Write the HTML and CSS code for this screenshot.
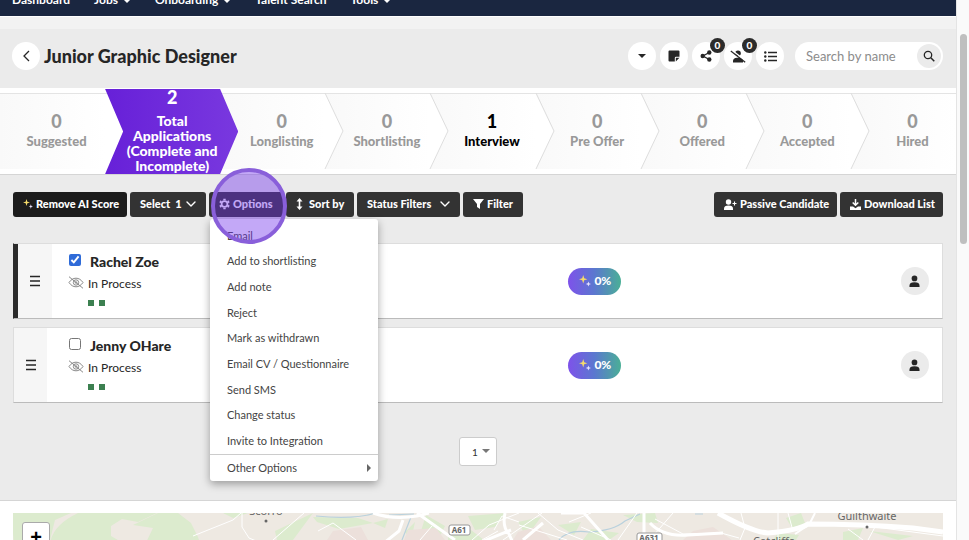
FILE: index.html
```html
<!DOCTYPE html>
<html lang="en">
<head>
<meta charset="utf-8">
<title>Junior Graphic Designer</title>
<link rel="stylesheet" href="styles.css">
</head>
<body>
<svg class="defs" aria-hidden="true">
  <symbol id="sparkle" viewBox="0 0 12 12"><path class="spark-big" d="M4.2 0 5.2 3.200 8.400 4.200 5.200 5.200 4.200 8.400 3.200 5.200 0 4.200 3.200 3.200Z"/><path class="spark-small" d="M9.400 6.400 10.100 8.300 12 9 10.100 9.700 9.400 11.600 8.700 9.700 6.800 9 8.700 8.300Z"/></symbol>
  <symbol id="chevron" viewBox="0 0 10 6"><path d="M1 1 5 5 9 1" fill="none" stroke="currentColor" stroke-width="1.4" stroke-linecap="round" stroke-linejoin="round"/></symbol>
  <symbol id="person" viewBox="0 0 12 14"><circle cx="6" cy="3.6" r="3.1"/><path d="M.5 13V11.6C.5 9 2.2 7.8 6 7.8S11.500 9 11.500 11.600V13Z"/></symbol>
  <symbol id="hidden" viewBox="0 0 16 13"><g fill="none" stroke="#8a8a8a" stroke-width="1"><path d="M1 6.500C3 3.600 5.300 2.200 8 2.200S13 3.600 15 6.500C13 9.400 10.700 10.800 8 10.800S3 9.400 1 6.500Z"/><circle cx="8" cy="6.500" r="2.700"/><circle cx="8" cy="6.500" r=".8"/><path d="M1 .7 15 12.300"/></g></symbol>
  <symbol id="bars" viewBox="0 0 12 12"><path d="M1 1.500H11M1 6H11M1 10.500H11" stroke="currentColor" stroke-width="1.700"/></symbol>
</svg>
<div class="page">
  <div class="content">
    <nav class="nav">
      <a href="#">Dashboard</a>
      <a href="#">Jobs <i class="caret"></i></a>
      <a href="#">Onboarding <i class="caret"></i></a>
      <a href="#">Talent Search</a>
      <a href="#">Tools <i class="caret"></i></a>
    </nav>
    <div class="subnav"></div>
    <header class="header">
      <button class="round" aria-label="Back"><svg width="7" height="12" viewBox="0 0 7 12"><path d="M6 1 1 6 6 11" fill="none" stroke="currentColor" stroke-width="1.300"/></svg></button>
      <h1>Junior Graphic Designer</h1>
      <div class="tools">
        <button class="round" aria-label="More"><i class="caret"></i></button>
        <button class="round" aria-label="Notes"><svg width="12" height="12" viewBox="0 0 12 12"><path d="M1.500 .5H10.500Q11.500 .5 11.500 1.500V6.800H8Q6.800 6.800 6.800 8V11.500H1.500Q.5 11.500 .5 10.500V1.500Q.5 .5 1.500 .5Z"/><path d="M7.800 11.500V7.800H11.500Z"/></svg></button>
        <button class="round" aria-label="Share"><svg width="12" height="12" viewBox="0 0 12 12"><path d="M9.200 2.500 3 6 9.200 9.500" fill="none" stroke="currentColor" stroke-width="1.300"/><circle cx="9.300" cy="2.500" r="2.200"/><circle cx="2.700" cy="6" r="2.200"/><circle cx="9.300" cy="9.500" r="2.200"/></svg><span class="count">0</span></button>
        <button class="round" aria-label="Hidden people"><svg width="16" height="13" viewBox="0 0 16 13"><circle cx="8" cy="3.300" r="2.800"/><path d="M3 12.500V11Q3 8.200 7 7.800H9Q13 8.200 13 11V12.500Z"/><path d="M1.800 .2 16 11.200" stroke="#fff" stroke-width="1.500"/><path d="M.8 1 15.200 12.300" stroke="currentColor" stroke-width="1.200"/></svg><span class="count">0</span></button>
        <button class="round" aria-label="List"><svg width="13" height="11" viewBox="0 0 13 11"><path d="M4 1.500H13M4 5.500H13M4 9.500H13" stroke="currentColor" stroke-width="1.400"/><circle cx="1.300" cy="1.500" r="1.200"/><circle cx="1.300" cy="5.500" r="1.200"/><circle cx="1.300" cy="9.500" r="1.200"/></svg></button>
        <div class="search">
          <input type="text" placeholder="Search by name" aria-label="Search by name">
          <button aria-label="Search"><svg width="12" height="12" viewBox="0 0 12 12"><circle cx="5" cy="5" r="3.700" fill="none" stroke="currentColor" stroke-width="1.300"/><path d="M7.800 7.800 11.300 11.300" stroke="currentColor" stroke-width="1.500"/></svg></button>
        </div>
      </div>
    </header>

    <ol class="pipeline">
      <li class="stage first"><b>0</b><span>Suggested</span></li>
      <li class="stage total"><b>2</b><span>Total Applications (Complete and Incomplete)</span></li>
      <li class="stage"><b>0</b><span>Longlisting</span></li>
      <li class="stage"><svg class="edge" viewBox="0 0 18 76" preserveAspectRatio="none"><path d="M0 0 18 38 0 76"/></svg><b>0</b><span>Shortlisting</span></li>
      <li class="stage current"><svg class="edge" viewBox="0 0 18 76" preserveAspectRatio="none"><path d="M0 0 18 38 0 76"/></svg><b>1</b><span>Interview</span></li>
      <li class="stage"><svg class="edge" viewBox="0 0 18 76" preserveAspectRatio="none"><path d="M0 0 18 38 0 76"/></svg><b>0</b><span>Pre Offer</span></li>
      <li class="stage"><svg class="edge" viewBox="0 0 18 76" preserveAspectRatio="none"><path d="M0 0 18 38 0 76"/></svg><b>0</b><span>Offered</span></li>
      <li class="stage"><svg class="edge" viewBox="0 0 18 76" preserveAspectRatio="none"><path d="M0 0 18 38 0 76"/></svg><b>0</b><span>Accepted</span></li>
      <li class="stage"><svg class="edge" viewBox="0 0 18 76" preserveAspectRatio="none"><path d="M0 0 18 38 0 76"/></svg><b>0</b><span>Hired</span></li>
    </ol>

    <main class="main">
      <div class="toolbar">
        <button class="btn ai"><svg width="10" height="10"><use href="#sparkle"/></svg>Remove AI Score</button>
        <button class="btn select">Select&nbsp; 1<svg class="down" width="10" height="6"><use href="#chevron"/></svg></button>
        <div class="options">
          <button class="btn open"><svg width="11" height="12" viewBox="0 0 12 12"><path d="M6 1.900V.3M6 10.100V11.700M2.500 4 1 3.100M9.500 8 11 8.900M2.500 8 1 8.900M9.500 4 11 3.100" stroke="currentColor" stroke-width="2.600"/><circle cx="6" cy="6" r="3.200" fill="none" stroke="currentColor" stroke-width="1.900"/></svg>Options</button>
          <ul class="menu">
            <li><a href="#">Email</a></li>
            <li><a href="#">Add to shortlisting</a></li>
            <li><a href="#">Add note</a></li>
            <li><a href="#">Reject</a></li>
            <li><a href="#">Mark as withdrawn</a></li>
            <li><a href="#">Email CV / Questionnaire</a></li>
            <li><a href="#">Send SMS</a></li>
            <li><a href="#">Change status</a></li>
            <li><a href="#">Invite to Integration</a></li>
            <li class="other"><a href="#">Other Options<i class="arrow"></i></a></li>
          </ul>
          <span class="spot"></span>
        </div>
        <button class="btn sort"><svg width="7" height="12" viewBox="0 0 7 12"><path d="M3.500 2V10" stroke="currentColor" stroke-width="1.600"/><path d="M3.500 0 6.500 3.600H.5ZM3.500 12 .5 8.400H6.500Z"/></svg>Sort by</button>
        <button class="btn status">Status Filters<svg class="down" width="10" height="6"><use href="#chevron"/></svg></button>
        <button class="btn filter"><svg width="11" height="10" viewBox="0 0 11 10"><path d="M0 0H11L7 5V10L4 8V5Z"/></svg>Filter</button>
        <button class="btn passive"><svg width="13" height="11" viewBox="0 0 13 11"><circle cx="4.500" cy="3" r="2.700"/><path d="M0 11V9.500Q0 6.500 4.500 6.500T9 9.500V11Z"/><path d="M10.500 2.500V6.500M8.500 4.500H12.500" stroke="currentColor" stroke-width="1.100"/></svg>Passive Candidate</button>
        <button class="btn download"><svg width="11" height="11" viewBox="0 0 11 11"><path d="M5.500 0V6M2.700 3.500 5.500 6.300 8.300 3.500" fill="none" stroke="currentColor" stroke-width="1.500"/><path d="M0 7.500H3L5.500 9.300 8 7.500H11V11H0Z"/></svg>Download List</button>
      </div>

      <article class="card chosen">
        <div class="grip"><svg width="12" height="12"><use href="#bars"/></svg></div>
        <div class="info">
          <label><input type="checkbox" checked><strong>Rachel Zoe</strong></label>
          <p><svg width="16" height="13"><use href="#hidden"/></svg>In Process</p>
          <div class="dots"><i></i><i></i></div>
        </div>
        <div><span class="score"><svg width="12" height="12"><use href="#sparkle"/></svg>0%</span></div>
        <button class="avatar" aria-label="Rachel Zoe profile"><svg width="11" height="13"><use href="#person"/></svg></button>
      </article>
      <article class="card">
        <div class="grip"><svg width="12" height="12"><use href="#bars"/></svg></div>
        <div class="info">
          <label><input type="checkbox"><strong>Jenny OHare</strong></label>
          <p><svg width="16" height="13"><use href="#hidden"/></svg>In Process</p>
          <div class="dots"><i></i><i></i></div>
        </div>
        <div><span class="score"><svg width="12" height="12"><use href="#sparkle"/></svg>0%</span></div>
        <button class="avatar" aria-label="Jenny OHare profile"><svg width="11" height="13"><use href="#person"/></svg></button>
      </article>

      <div class="pager"><select aria-label="Page"><option>1</option></select><i class="caret"></i></div>
    </main>

    <section class="map">
      <svg viewBox="0 0 930 200" preserveAspectRatio="xMinYMin slice">
        <rect width="930" height="200" fill="#eee9e2"/>
        <g fill="#dcebce">
          <path d="M0 0H58L42 7 37 27V60H3L0 20Z"/>
          <path d="M65 0H144L125 9 109 6 98 13 98 23 110 30H37Q40 12 65 0Z"/>
          <path d="M145 0H165L178 10 185 24 190 40H128L140 15 120 12Z"/>
          <path d="M300 4 345 5 360 10 326 16 304 9ZM210 0H235L220 5ZM262 18 300 0 280 27H264ZM360 10 375 6 372 15ZM413 2 432 13 425 27 408 18ZM392 19 402 9 398 27ZM455 3 493 0 482 14 462 17ZM505 9 528 4 520 15 510 18ZM545 12 568 9 561 22ZM610 2 642 0 645 10 624 9ZM773 5 788 0 792 10 779 15ZM765 20 786 22 781 30 760 27ZM830 19 850 15 845 27 830 30ZM856 18 900 23 885 27ZM578 16 606 20 596 27 570 27ZM435 21 458 17 471 27H435Z"/>
        </g>
        <g fill="#ece0db"><path d="M395 17 423 15 432 27H391ZM320 18 348 14 355 27H314ZM505 19 525 13 538 27H500ZM680 18 700 14 719 27H670Z"/></g>
        <g fill="none" stroke="#b9d1dd" stroke-width="1.200"><path d="M303 3Q340 7 363 0M376 2 401 1M398 4 389 27M546 27Q555 16 576 19 600 18 612 8L627 1M682 1H690"/></g>
        <g fill="none" stroke="#fff" stroke-width="1">
          <path d="M229 0V14L236 25 248 30M180 23 220 7 228 0M291 0Q276 13 260 27M305 18 320 10 343 27M419 13 407 27M459 27 476 12 506 0M490 27 529 0M506 12 554 27M525 0 545 17 570 27M642 6 670 21 708 20 726 25M728 0 732 15 727 27M765 0V27M775 0 780 18M835 16 850 27M855 27 862 14 930 23M660 0 640 23M578 0 556 9M485 18 469 27M506 9 489 3 481 17M568 14 598 27M605 27 624 0"/>
        </g>
        <g fill="none" stroke="#fff" stroke-width="3">
          <path d="M360 0Q380 7 404 3L416 0M390 7 386 18 371 30M404 0 442 27M492 0Q489 14 496 21L500 30M498 17 466 30M530 10 510 27M548 0 571 0 595 27M631 0V27M637 10Q650 24 675 22L710 20"/>
          <path d="M705 0Q739 19 755 20 787 17 795 11 848 11 900 15L930 19" stroke-width="5"/>
          <path d="M797 10 802 0M797 11 782 21" stroke-width="2"/>
        </g>
        <g class="places">
          <text x="253" y="2" text-anchor="middle">Scorro</text><circle cx="253" cy="8" r="1.500"/>
          <text x="854" y="7" text-anchor="middle">Guilthwaite</text><circle cx="854" cy="14" r="1.500"/>
          <text x="761" y="32" text-anchor="middle">Catcliffe</text>
        </g>
        <g class="roads"><rect x="436" y="12" width="21" height="10" rx="2"/><text x="446" y="20">A61</text><rect x="624" y="20" width="25" height="10" rx="2"/><text x="636" y="28">A631</text></g>
      </svg>
      <button class="zoom" aria-label="Zoom in">+</button>
    </section>
  </div>
  <div class="scroll"><i></i></div>
</div>
</body>
</html>
```
FILE: styles.css
```css
* { box-sizing: border-box; }
body { margin: 0; background: #fff; color: #262626; font: 12px/16px Lato, "Liberation Sans", sans-serif; overflow: hidden; }
button, input, select { font: inherit; color: inherit; margin: 0; }
button { border: 0; padding: 0; cursor: pointer; }
a { color: inherit; text-decoration: none; }
svg { display: block; fill: currentColor; flex: none; }
ul, ol, p, h1 { margin: 0; padding: 0; list-style: none; }
.defs { position: absolute; width: 0; height: 0; }
.spark-big { fill: #f6dc6a; }
.spark-small { fill: #e9e4ff; }

.page { display: flex; height: 100vh; overflow: hidden; }
.content { flex: 1; min-width: 0; border-right: 1px solid #e4e4e4; }
.scroll { width: 12px; padding: 34px 2px 0 3px; background: #fafafa; }
.scroll i { display: block; height: 210px; border-radius: 4px; background: #bfbfbf; }

.caret { display: inline-block; border: 4px solid transparent; border-top-color: currentColor; border-bottom: 0; }
.nav { display: flex; align-items: flex-end; gap: 24px; height: 16px; padding: 0 12px 8px; overflow: hidden; background: #1a2640; color: #fff; font-weight: 700; }
.nav a { flex: none; }
.nav .caret { border-width: 3px 3px 0; margin: 0 1px 1px 3px; }
.subnav { height: 13px; background: #f2f2f2; border-top: 1px solid #fff; }

.header { display: flex; align-items: center; gap: 4px; padding: 13px 13px 18px 12px; background: #ebebeb; }
.header h1 { flex: 1; font-size: 18px; line-height: 24px; font-weight: 900; white-space: nowrap; }
.round { position: relative; display: flex; align-items: center; justify-content: center; width: 28px; height: 28px; border-radius: 50%; background: #fff; }
.tools { display: flex; gap: 4px; }
.count { position: absolute; top: -4px; right: -5px; width: 15px; height: 15px; border-radius: 50%; background: #2b2b2b; color: #fff; font-size: 10px; line-height: 15px; font-weight: 900; }
.search { display: flex; align-items: center; width: 148px; height: 28px; margin-left: 7px; padding: 0 2px 0 11px; border-radius: 14px; background: #fff; }
.search input { flex: 1; min-width: 0; border: 0; padding: 0; background: none; font-size: 13px; outline: 0; }
.search input::placeholder { color: #8c8c8c; }
.search button { display: flex; align-items: center; justify-content: center; width: 24px; height: 24px; border-radius: 50%; background: #ebebeb; }

.pipeline { position: relative; z-index: 0; display: grid; grid-template-columns: 105fr 115fr repeat(7, 105fr); padding: 5px 0 4px; background: linear-gradient(#e4e4e4, #e4e4e4) 0 5px / 100% 1px no-repeat #fff; border-bottom: 1px solid #d5d5d5; }
.stage { position: relative; display: flex; flex-direction: column; align-items: center; justify-content: center; min-width: 0; height: 76px; padding: 0 0 3px 18px; color: #999; font-size: 13px; font-weight: 900; text-align: center; }
.stage::before { content: ""; position: absolute; z-index: -1; inset: 1px 0 0; background: linear-gradient(90deg, #f9f9f9, #fff); clip-path: polygon(0 0, 100% 0, 100% 100%, 0 100%, 18px 50%); }
.stage b { font-size: 18px; line-height: 20px; margin-bottom: 2px; font-weight: 900; }
.stage.first { padding-left: 8px; }
.stage.first::before { clip-path: none; }
.stage.current { color: #000; }
.stage.total { z-index: 1; height: 85px; margin: -4px -18px -4px 0; padding: 0 14px 1px 15px; justify-content: flex-end; clip-path: polygon(0 0, 115px 0, 100% 50%, 115px 100%, 0 100%, 18px 50%); background: linear-gradient(90deg, #6720d8, #7938df); color: #fff; font-size: 14px; line-height: 15px; }
.stage.total::before { content: none; }
.stage.total b { margin-bottom: 6px; }
.edge { position: absolute; left: 0; top: 0; width: 18px; height: 100%; fill: none; stroke: #dedede; overflow: visible; }

.main { padding: 17px 13px 34px; background: #ebebeb; border-bottom: 1px solid #d5d5d5; }
.toolbar { display: flex; gap: 3px; margin-bottom: 26px; }
.btn { display: flex; align-items: center; gap: 3px; height: 25px; padding: 0 10px 1px; border-radius: 3px; background: #333; color: #fff; font-size: 11px; font-weight: 900; white-space: nowrap; }
.btn.ai { width: 114px; background: #1c1c1c; }
.btn.select { width: 76px; }
.btn.open { width: 74px; }
.btn.sort { width: 68px; gap: 6px; }
.btn.status { width: 103px; }
.btn.filter { width: 60px; }
.btn.passive { width: 123px; margin-left: auto; }
.btn.download { width: 103px; }
.down { margin-left: auto; }
.options { position: relative; z-index: 2; }
.menu { position: absolute; left: 1px; top: 27px; display: grid; grid-template-rows: repeat(9, 1fr) 27px; width: 168px; height: 262px; padding: 4px 0 0; border-radius: 3px; background: #fff; box-shadow: 0 3px 9px rgba(0,0,0,.35); color: #444; font-size: 11px; }
.menu a { display: flex; align-items: center; height: 100%; padding: 0 7px 0 17px; }
.other { border-top: 1px solid #ccc; }
.arrow { margin-left: auto; border: 4px solid transparent; border-left-color: #666; border-right: 0; }
.spot { position: absolute; left: 2px; top: -24px; width: 76px; height: 76px; border: 4px solid #895fda; border-radius: 50%; background: rgba(112,48,235,.42); pointer-events: none; }

.card { display: grid; grid-template-columns: 54px 501fr 333fr 41px; align-items: center; height: 76px; margin-bottom: 8px; background: #fff; border: 1px solid #ddd; border-bottom-color: #bbb; }
.grip { display: flex; align-items: center; justify-content: center; align-self: stretch; width: 33px; background: #f6f6f6; }
.chosen .grip { width: 38px; border-left: 4px solid #2b2b2b; }
.chosen { border-left-color: #2b2b2b; }
.info { padding-bottom: 5px; }
.info label { display: flex; align-items: center; gap: 9px; font-size: 14px; line-height: 20px; }
.info strong { font-weight: 900; }
.info input { width: 12px; height: 12px; margin: 0 0 3px 1px; accent-color: #2f6bd8; }
.info p { display: flex; align-items: center; gap: 4px; font-size: 12px; line-height: 24px; }
.info p svg { margin-bottom: 3px; }
.dots { display: flex; gap: 5px; padding: 4px 0 0 20px; }
.dots i { width: 6px; height: 6px; background: #3c8050; }
.score { display: flex; align-items: center; gap: 3px; width: 53px; height: 27px; padding-left: 11px; border-radius: 14px; background: linear-gradient(90deg, #7e52ea, #5b78cf 50%, #4aaf96); color: #fff; font-size: 12px; font-weight: 900; }
.avatar { display: flex; align-items: center; justify-content: center; width: 28px; height: 28px; border-radius: 50%; background: #ebebeb; }

.pager { position: relative; width: 38px; margin: 34px auto 0; color: #777; }
.pager select { display: block; appearance: none; width: 100%; height: 29px; padding: 0 12px; border: 1px solid #ccc; border-radius: 3px; background: #fff; color: #333; font-size: 10px; }
.pager .caret { position: absolute; right: 7px; top: 12px; pointer-events: none; }

.map { position: relative; padding: 12px 13px; }
.map > svg { width: 100%; height: 200px; }
.places { fill: #666; font: 11px "Noto Sans", sans-serif; }
.roads rect { fill: #fff; stroke: #999; }
.roads text { fill: #666; font: 700 8px "Noto Sans", sans-serif; text-anchor: middle; }
.zoom { position: absolute; left: 22px; top: 21px; width: 28px; height: 30px; border: 1px solid #aaa; border-radius: 3px; background: #fff; color: #000; font: 700 20px/28px "Liberation Sans", sans-serif; }
```
